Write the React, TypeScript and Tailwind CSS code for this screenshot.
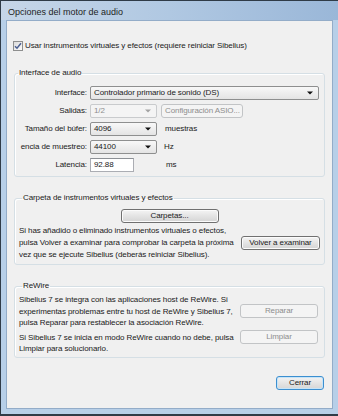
import type { ReactNode } from 'react'
import clsx from 'clsx'

const Arrow = ({ disabled }: { disabled?: boolean }) => (
  <svg width="6" height="4" viewBox="0 0 6 4" className="shrink-0">
    <path d="M0 0.5h6L3 3.5z" fill={disabled ? '#a3a3a3' : '#111'} />
  </svg>
)

const Combo = ({ value, width, disabled }: { value: string; width: string; disabled?: boolean }) => (
  <div
    className={clsx(
      'h-[14px] flex items-center justify-between pl-[3px] pr-[5px] rounded-[2px] border',
      disabled
        ? 'border-[#c9cbcd] bg-[#f4f4f4] text-[#8d8d8d]'
        : 'border-[#8e8f8f] bg-linear-to-b from-[#f8f8f8] to-[#e4e4e4] text-[#1a1a1a]',
      width
    )}
  >
    <span>{value}</span>
    <Arrow disabled={disabled} />
  </div>
)

const Btn = ({
  children,
  className,
  disabled,
  primary,
}: {
  children: ReactNode
  className?: string
  disabled?: boolean
  primary?: boolean
}) => (
  <div
    className={clsx(
      'h-[14px] flex items-center justify-center rounded-[3px] border shrink-0',
      disabled
        ? 'border-[#c2c4c6] bg-[#f4f4f4] text-[#8d8d8d]'
        : primary
          ? 'border-[#3c8fd0] bg-linear-to-b from-[#f3f3f3] to-[#d6d6d6] text-[#1a1a1a] shadow-[inset_0_0_0_1px_#c6e4f8]'
          : 'border-[#707070] bg-linear-to-b from-[#f4f4f4] to-[#d4d4d4] text-[#1a1a1a] shadow-[inset_0_0_0_1px_#fbfbfb]',
      className
    )}
  >
    {children}
  </div>
)

const Group = ({ title, children, className }: { title: string; children: ReactNode; className?: string }) => (
  <fieldset
    className={clsx(
      'mx-[7px] border border-[#d5dfe5] rounded-[3px] shadow-[inset_1px_1px_0_#ffffff]',
      className
    )}
  >
    <legend className="ml-[3px] px-[1px] leading-[10px] text-[#1a1a1a]">{title}</legend>
    {children}
  </fieldset>
)

// etiqueta alineada a la derecha, la columna mide 72px
const Row = ({ label, children }: { label: string; children: ReactNode }) => (
  <div className="flex items-center h-[14px]">
    <div className="w-[72px] flex justify-end shrink-0">
      <span className="whitespace-nowrap">{label}</span>
    </div>
    <div className="ml-[3px] flex items-center">{children}</div>
  </div>
)

const App = () => {
  return (
    <div className="w-[338px] h-[416px] flex flex-col bg-[#b7cfe8] border-t border-l border-b-2 border-[#2f3b47] font-['Liberation_Sans',Arial,sans-serif] text-[8px] tracking-[-0.1px] text-[#1a1a1a] overflow-hidden">
      {/* Barra de título */}
      <div className="h-[19px] shrink-0 pl-[7px] pt-[6px] leading-[11px] text-[9px] tracking-normal text-[#1e1e1e] bg-linear-to-r from-[#c6d6e8] via-[#b0c8e2] to-[#9ab7d8]">
        Opciones del motor de audio
      </div>

      <div className="flex-1 flex flex-col ml-[5px] mr-[5px] mb-[5px] bg-[#f0f0f0] border border-[#93acc8]">
        {/* Checkbox */}
        <div className="flex items-center mt-[20px] ml-[6px] h-[10px]">
          <div className="w-[10px] h-[10px] border border-[#8e8f8f] bg-linear-to-br from-[#dcdcdc] to-[#fbfbfb] flex items-center justify-center">
            <svg width="8" height="8" viewBox="0 0 8 8">
              <path d="M1 4.2l2 2 4-5" fill="none" stroke="#4b5f92" strokeWidth="1.5" />
            </svg>
          </div>
          <span className="ml-[2px]">Usar instrumentos virtuales y efectos (requiere reiniciar Sibelius)</span>
        </div>

        {/* Interface de audio */}
        <Group title="Interface de audio" className="mt-[17px] pt-[8px] pb-[4px]">
          <div className="flex flex-col gap-[4px]">
            <Row label="Interface:">
              <Combo value="Controlador primario de sonido (DS)" width="w-[229px]" />
            </Row>
            <Row label="Salidas:">
              <Combo value="1/2" width="w-[67px]" disabled />
              <Btn disabled className="ml-[4px] w-[82px] justify-start! pl-[3px]">
                Configuración ASIO...
              </Btn>
            </Row>
            <Row label="Tamaño del búfer:">
              <Combo value="4096" width="w-[67px]" />
              <span className="ml-[8px]">muestras</span>
            </Row>
            <Row label="encia de muestreo:">
              <Combo value="44100" width="w-[67px]" />
              <span className="ml-[7px]">Hz</span>
            </Row>
            <Row label="Latencia:">
              <div className="w-[44px] h-[14px] flex items-center pl-[3px] bg-white border border-[#abadb3] border-t-[#8c9095]">
                92.88
              </div>
              <span className="ml-[32px]">ms</span>
            </Row>
          </div>
        </Group>

        {/* Carpeta */}
        <Group title="Carpeta de instrumentos virtuales y efectos" className="mt-[16px] pt-[6px] pb-[3px] pl-[4px] pr-[4px]">
          <div className="flex justify-center">
            <Btn className="w-[98px]">Carpetas...</Btn>
          </div>
          <div className="flex items-center mt-[2px]">
            <p className="leading-[12px] whitespace-nowrap">
              Si has añadido o eliminado instrumentos virtuales o efectos,
              <br />
              pulsa Volver a examinar para comprobar la carpeta la próxima
              <br />
              vez que se ejecute Sibelius (deberás reiniciar Sibelius).
            </p>
            <Btn className="ml-auto w-[79px]">Volver a examinar</Btn>
          </div>
        </Group>

        {/* ReWire */}
        <Group title="ReWire" className="mt-[16px] pt-[3px] pb-[3px] pl-[4px] pr-[6px]">
          <div className="flex items-center">
            <p className="leading-[11.5px] whitespace-nowrap">
              Sibelius 7 se integra con las aplicaciones host de ReWire. Si
              <br />
              experimentas problemas entre tu host de ReWire y Sibelius 7,
              <br />
              pulsa Reparar para restablecer la asociación ReWire.
            </p>
            <Btn disabled className="ml-auto w-[78px]">Reparar</Btn>
          </div>
          <div className="flex items-start mt-[3px]">
            <p className="leading-[11px] whitespace-nowrap">
              Si Sibelius 7 se inicia en modo ReWire cuando no debe, pulsa
              <br />
              Limpiar para solucionarlo.
            </p>
            <Btn disabled className="ml-auto w-[78px] mt-[-2px]">Limpiar</Btn>
          </div>
        </Group>

        <div className="flex justify-end mt-[18px] mr-[8px]">
          <Btn primary className="w-[48px]">Cerrar</Btn>
        </div>
      </div>
    </div>
  )
}

export default App
